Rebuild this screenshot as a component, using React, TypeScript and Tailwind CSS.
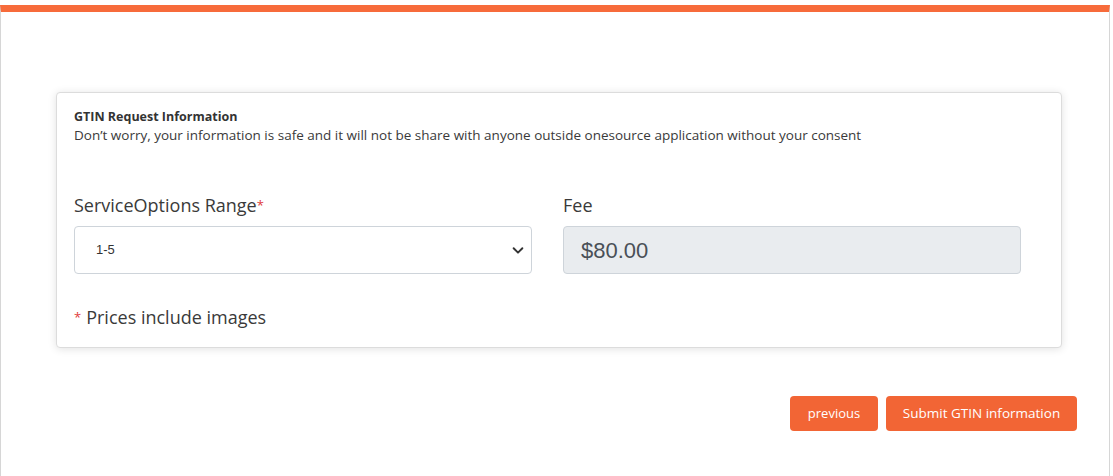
import React from "react";

export default function App() {
  return (
    <div className="h-[476px] overflow-hidden bg-white pt-[5px]" style={{ fontFamily: "'Open Sans', sans-serif" }}>
      <div className="w-[1110px] h-[520px] border-x border-x-[#d6d6d6] border-t-[7px] border-t-[#f76b3b] bg-white">
        <div className="pt-[80px] pl-[55px]">
          <div className="w-[1006px] h-[256px] rounded border border-[#dcdcdc] bg-white shadow-[0_1px_8px_rgba(0,0,0,0.12)] px-[17px] pt-[16px]">
            <h4 className="text-[12.5px] font-bold text-[#333] leading-[16px]">GTIN Request Information</h4>
            <p className="text-[13.5px] text-[#3a3a3a] leading-[20px]">
              Don’t worry, your information is safe and it will not be share with anyone outside onesource application without your consent
            </p>

            <div className="flex gap-[31px] mt-[48px]">
              <div className="w-[458px]">
                <label className="block text-[18px] text-[#3a3a3a] leading-[24px] mb-[9px]">
                  ServiceOptions Range<span className="text-[#e03a3a] text-[13px] align-top">*</span>
                </label>
                <div className="h-[48px] rounded border border-[#ced4da] bg-white flex items-center justify-between pl-[21px] pr-[6px]">
                  <span className="text-[13px] text-[#333]" style={{ fontFamily: "'Liberation Sans', Arial, sans-serif" }}>1-5</span>
                  <svg width="14" height="14" viewBox="0 0 16 16" fill="none" stroke="#333" strokeWidth="2.2" strokeLinecap="round" strokeLinejoin="round">
                    <path d="M3 6l5 5 5-5" />
                  </svg>
                </div>
              </div>
              <div className="w-[458px]">
                <label className="block text-[18px] text-[#3a3a3a] leading-[24px] mb-[9px]">Fee</label>
                <div className="h-[48px] rounded border border-[#ced4da] bg-[#e9ecef] flex items-center pl-[17px]">
                  <span className="text-[22px] text-[#495057]" style={{ fontFamily: "'Liberation Sans', Arial, sans-serif" }}>$80.00</span>
                </div>
              </div>
            </div>

            <p className="mt-[31px] text-[18px] text-[#3a3a3a] leading-[24px]">
              <span className="text-[#e03a3a] text-[13px] align-top mr-[5px]">*</span>Prices include images
            </p>
          </div>
        </div>

        <div className="flex justify-end gap-[8px] pr-[32px] mt-[48px]">
          <button className="h-[35px] w-[88px] rounded bg-[#f26535] text-white text-[13px]">previous</button>
          <button className="h-[35px] w-[191px] rounded bg-[#f26535] text-white text-[13.5px]">Submit GTIN information</button>
        </div>
      </div>
    </div>
  );
}
